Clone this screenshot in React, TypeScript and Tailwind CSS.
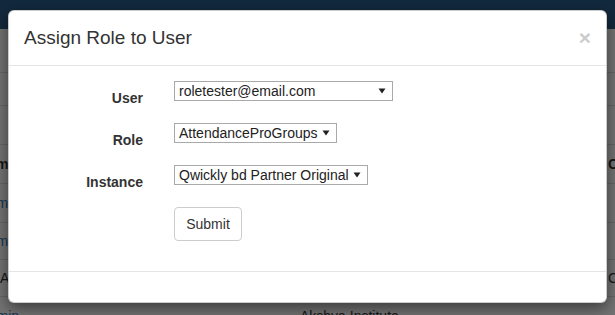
import React from 'react';

const rows = [
  { h: "h-[39px]", left: "Name", leftCls: "pl-[6px] font-bold text-[#333]", mid: "Institute", midCls: "font-bold", right: "Created", rightCls: "font-bold" },
  { h: "h-[39px]", left: "admin", leftCls: "pl-[9px] text-[#337ab7]", mid: "", midCls: "", right: "", rightCls: "" },
  { h: "h-[37px]", left: "admin", leftCls: "pl-[9px] text-[#337ab7]", mid: "", midCls: "", right: "", rightCls: "" },
  { h: "h-[37px]", left: "Admin", leftCls: "pl-[28px] text-[#333]", mid: "", midCls: "", right: "Cmd", rightCls: "" },
  { h: "h-[40px]", left: "admin", leftCls: "pl-[9px] text-[#337ab7]", mid: "Akshya Institute", midCls: "", right: "", rightCls: "" },
];

const fields = [
  { label: "User", value: "roletester@email.com", w: "w-[219px]" },
  { label: "Role", value: "AttendanceProGroups", w: "w-[163px]" },
  { label: "Instance", value: "Qwickly bd Partner Original", w: "w-[194px]" },
];

function Caret() {
  return (
    <svg width="8" height="6" viewBox="0 0 8 6" className="shrink-0">
      <path d="M0.5 0.5 L7.5 0.5 L4 5.5 Z" fill="#222" />
    </svg>
  );
}

export default function App() {
  return (
    <div className="relative h-[315px] w-[615px] overflow-hidden bg-white font-['Liberation_Sans',Arial,sans-serif] text-[14px] text-[#333]">
      {/* page behind the modal */}
      <nav className="h-[29px] bg-[#2c5b87]" />
      <div className="h-[44px] border-b border-[#ddd]" />
      <div className="h-[33px] border-b border-[#ddd]" />
      <div className="h-[39px] border-b border-[#ddd]" />
      {rows.map((row, i) => (
        <div key={i} className={`${row.h} flex items-center whitespace-nowrap border-b border-[#ddd] -ml-[28px]`}>
          <div className={`w-[328px] shrink-0 ${row.leftCls}`}>{row.left}</div>
          <div className={`w-[307px] shrink-0 ${row.midCls}`}>{row.mid}</div>
          <div className={`shrink-0 pl-[1px] ${row.rightCls}`}>{row.right}</div>
        </div>
      ))}

      {/* backdrop */}
      <div className="absolute inset-0 bg-black/55" />

      {/* modal */}
      <div className="absolute left-[8px] top-[10px] w-[599px] rounded-[6px] border border-black/20 bg-white shadow-[0_5px_15px_rgba(0,0,0,0.5)]">
        <div className="flex items-center justify-between border-b border-[#e5e5e5] p-[15px]">
          <h4 className="text-[19px] leading-[24px] text-[#333]">Assign Role to User</h4>
          <button className="-mt-[2px] text-[21px] font-bold leading-none text-[#cccccc]">×</button>
        </div>

        <div className="p-[15px]">
          {fields.map((f) => (
            <div key={f.label} className="mb-[15px] flex">
              <label className="w-[134px] shrink-0 pr-[15px] pt-[7px] text-right font-bold leading-[20px] text-[#333]">
                {f.label}
              </label>
              <div className="pl-[16px]">
                <div className={`${f.w} flex h-[20px] items-center justify-between border border-[#a9a9a9] bg-white pl-[4px] pr-[6px] leading-[18px] text-[#222]`}>
                  <span className="whitespace-nowrap">{f.value}</span>
                  <Caret />
                </div>
              </div>
            </div>
          ))}
          <div className="mb-[15px] flex">
            <div className="w-[134px] shrink-0" />
            <div className="pl-[16px]">
              <button className="h-[34px] w-[68px] rounded-[4px] border border-[#ccc] bg-white text-[14px] text-[#333]">
                Submit
              </button>
            </div>
          </div>
        </div>

        <div className="h-[31px] border-t border-[#e5e5e5]" />
      </div>
    </div>
  );
}
